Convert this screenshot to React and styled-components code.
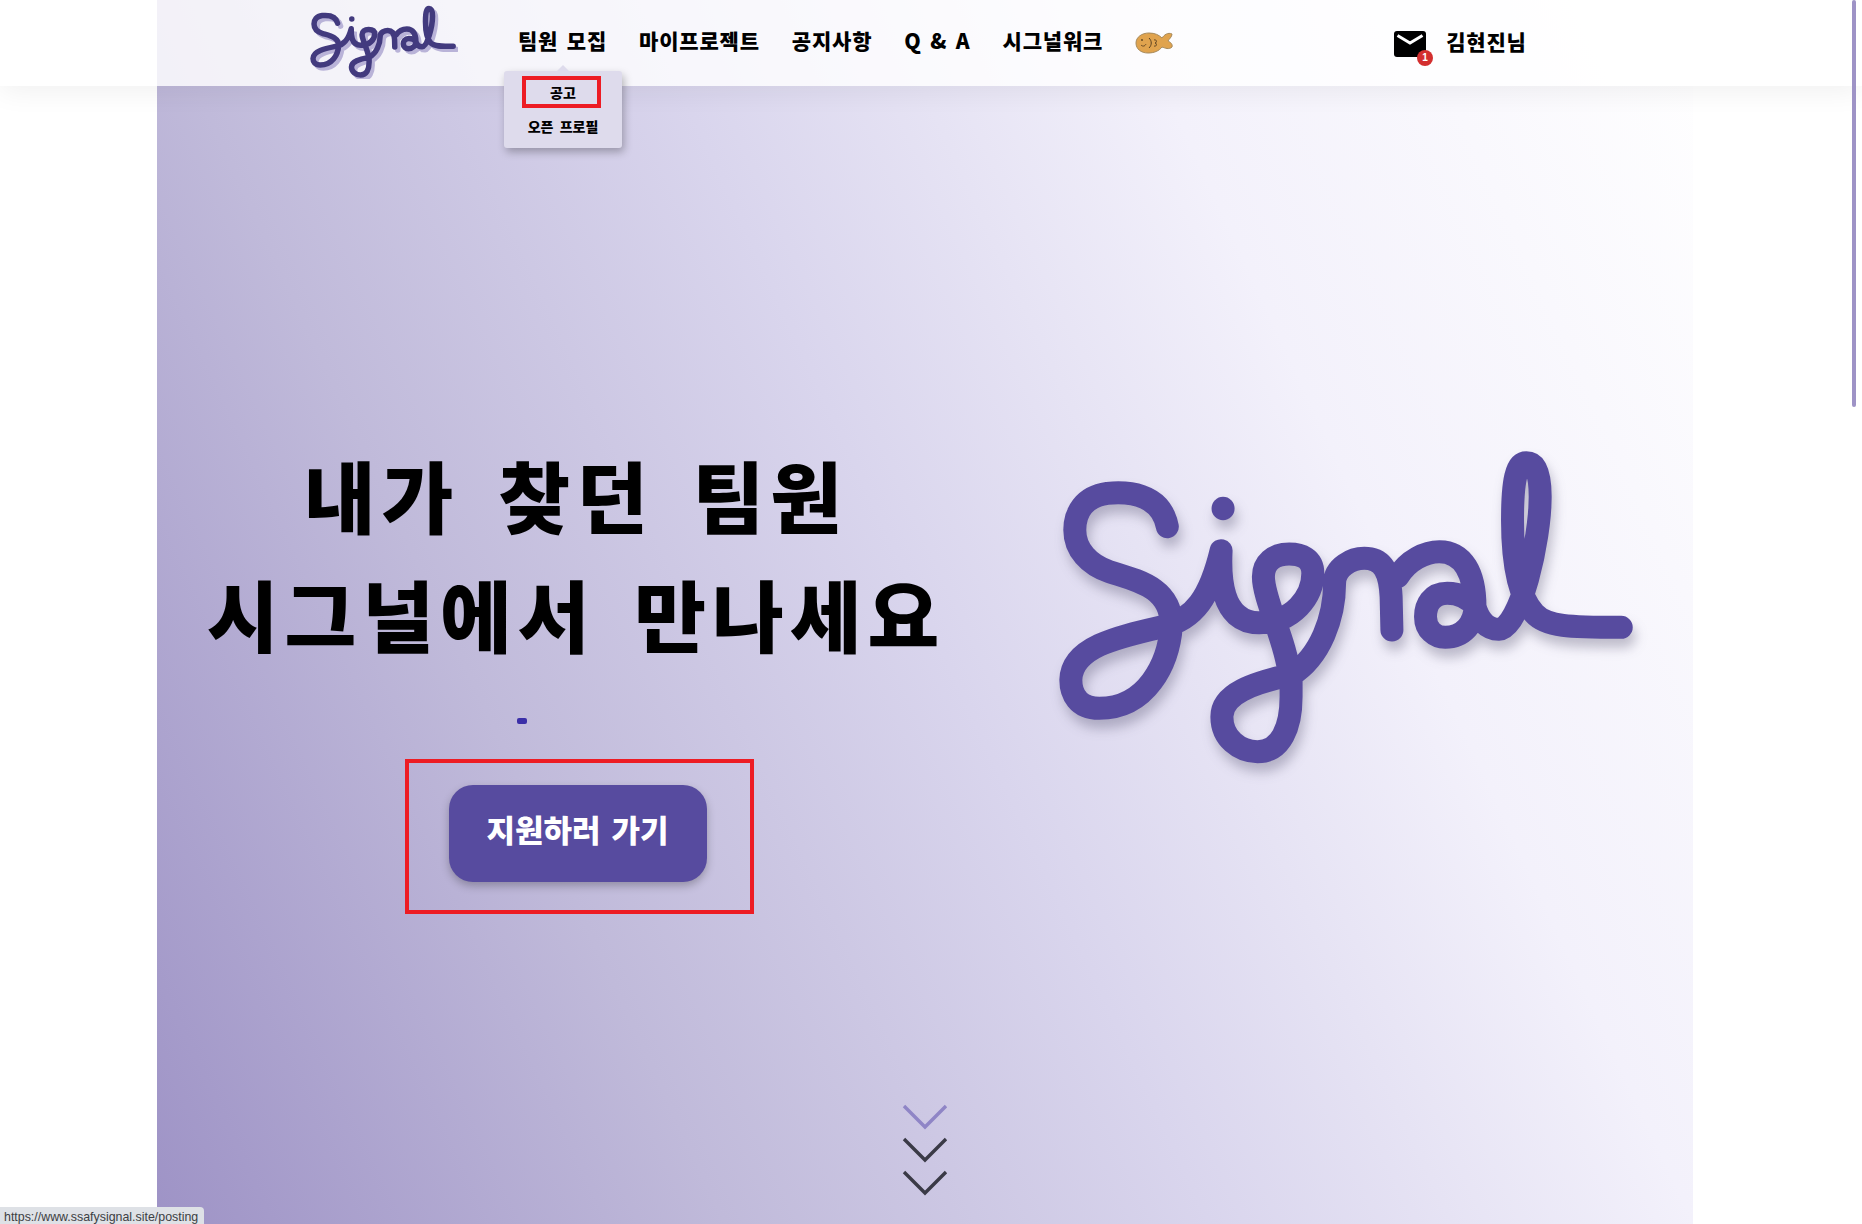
import styled, { createGlobalStyle } from "styled-components";

const GlobalStyle = createGlobalStyle`
  html, body {
    margin: 0;
    height: 100%;
    overflow: hidden;
    background: #fff;
    font-family: "Noto Sans CJK KR", "Noto Sans", sans-serif;
  }
  * { box-sizing: border-box; }
`;

const Page = styled.div`
  position: relative;
  height: 1224px;
  padding: 0 169px 0 157px;
`;

const Header = styled.header`
  position: absolute;
  top: 0;
  left: 0;
  right: 0;
  z-index: 5;
  height: 86px;
  display: flex;
  align-items: center;
  padding-left: 310px;
  background: rgba(255, 255, 255, 0.8);
  box-shadow: 0 6px 26px rgba(0, 0, 0, 0.06);
`;

const SmallLogoBox = styled.div`
  width: 148px;
  height: 76px;
  margin-top: -4px;
  flex: none;
`;

const Nav = styled.nav`
  display: flex;
  align-items: center;
  gap: 32px;
  margin-left: 60px;
`;

const NavItem = styled.div`
  position: relative;
  font-size: 21px;
  font-weight: 900;
  letter-spacing: 0.8px;
  color: #000;
  line-height: 28px;
  word-spacing: 3px;
  white-space: nowrap;
  margin-top: -6px;
`;

const Dropdown = styled.div`
  position: absolute;
  top: 45px;
  left: -14px;
  width: 118px;
  height: 77px;
  padding: 5px 0 0;
  display: flex;
  flex-direction: column;
  align-items: center;
  gap: 2px;
  background: #dedbec;
  border-radius: 3px;
  box-shadow: 2px 4px 9px rgba(0, 0, 0, 0.28);
  letter-spacing: 0;
  &::before {
    content: "";
    position: absolute;
    top: -6px;
    left: 53px;
    border-left: 6px solid transparent;
    border-right: 6px solid transparent;
    border-bottom: 6px solid #dedbec;
  }
`;

const DropItem = styled.div`
  width: 79px;
  height: 32px;
  display: flex;
  align-items: center;
  justify-content: center;
  font-size: 14px;
  font-weight: 900;
  color: #000;
  word-spacing: 3px;
  border: 4px solid ${(p) => (p.$marked ? "#ed1c24" : "transparent")};
  white-space: nowrap;
  ${(p) => p.$marked && "margin-right: 4px; padding-left: 4px;"}
`;

const UserBlock = styled.div`
  display: flex;
  align-items: center;
  gap: 20px;
  margin-left: 221px;
`;

const MailBox = styled.div`
  position: relative;
  width: 32px;
  height: 26px;
  margin-top: 1px;
`;

const Badge = styled.span`
  position: absolute;
  right: -7px;
  bottom: -9px;
  width: 16px;
  height: 16px;
  border-radius: 50%;
  background: #d32f2f;
  color: #fff;
  font-size: 10px;
  font-weight: 700;
  line-height: 16px;
  text-align: center;
  font-family: "Liberation Sans", sans-serif;
`;

const UserName = styled.div`
  font-size: 21px;
  font-weight: 900;
  letter-spacing: 0.8px;
  color: #000;
  margin-top: -5px;
`;

const Hero = styled.main`
  height: 1224px;
  display: flex;
  flex-direction: column;
  background: linear-gradient(65deg, #9e93c6 0%, #c0bada 27%, #d9d5ed 50%, #f3f1fb 73%, #ffffff 100%);
`;

const HeroRow = styled.section`
  display: flex;
  align-items: flex-start;
  padding-top: 430px;
`;

const HeroText = styled.div`
  width: 838px;
  flex: none;
  display: flex;
  flex-direction: column;
  align-items: center;
  padding-top: 5px;
`;

const Headline = styled.h1`
  margin: 0;
  font-size: 78px;
  font-weight: 900;
  letter-spacing: 6px;
  line-height: 119px;
  color: #000;
  text-align: center;
  word-spacing: 15px;
  white-space: nowrap;
`;

const Cursor = styled.span`
  width: 10px;
  height: 6px;
  margin: 45px 108px 0 0;
  border-radius: 2px;
  background: #3b2fa8;
`;

const CtaMark = styled.div`
  width: 349px;
  height: 155px;
  margin: 35px 0 0 6px;
  padding: 22px 0 0 40px;
  border: 4px solid #ed1c24;
`;

const CtaButton = styled.button`
  display: block;
  width: 258px;
  height: 97px;
  padding: 0 0 10px;
  border: none;
  border-radius: 24px;
  background: #574b9f;
  color: #fff;
  font-family: inherit;
  font-size: 31px;
  font-weight: 900;
  word-spacing: 4px;
  box-shadow: 0 4px 8px rgba(0, 0, 0, 0.25);
`;

const BigLogoBox = styled.div`
  width: 620px;
  height: 350px;
  margin-left: 45px;
  flex: none;
  filter: drop-shadow(3px 9px 6px rgba(60, 55, 90, 0.3));
`;

const Chevrons = styled.div`
  margin-top: auto;
  padding-bottom: 28px;
  display: flex;
  flex-direction: column;
  align-items: center;
  gap: 7px;
`;

const ScrollThumb = styled.div`
  position: absolute;
  top: 0;
  right: 6px;
  width: 4px;
  height: 407px;
  z-index: 6;
  border-radius: 3px;
  background: #9e93c6;
`;

const StatusBar = styled.div`
  position: absolute;
  left: 0;
  bottom: 0;
  z-index: 6;
  width: 204px;
  height: 17px;
  padding: 3px 0 0 4px;
  background: #dee1e6;
  border-top-right-radius: 4px;
  color: #3c4043;
  font-family: "Liberation Sans", sans-serif;
  font-size: 12.4px;
  line-height: 15px;
  white-space: nowrap;
  overflow: hidden;
`;

const SIGNAL_PATH = `
  M322 290 C305 185 215 185 170 190 C110 200 88 250 88 300 C88 360 125 405 175 425
  C240 450 335 470 332 590 C325 700 270 835 150 835 C95 835 78 790 78 750
  C80 650 200 620 310 590 C390 570 430 500 458 362
  C455 430 455 580 555 578 C640 578 690 500 690 430 C690 385 660 372 630 372
  C590 372 565 400 565 440 C565 510 625 640 630 735
  C540 760 460 790 460 860 C460 925 505 965 550 965 C610 965 635 890 635 800 L635 735
  C710 680 745 560 745 460 C745 410 790 385 820 385 C870 385 885 430 888 500 L890 600
  M905 440 C930 390 975 365 1010 365 C1070 365 1100 430 1100 530
  C1085 505 1060 490 1030 490 C990 490 975 525 975 560 C975 600 1000 622 1025 622
  C1070 622 1100 580 1100 530 C1110 570 1130 598 1160 598
  C1215 595 1265 330 1265 200 C1265 120 1250 98 1230 98 C1205 98 1195 150 1195 270
  C1195 400 1210 500 1250 550 C1280 590 1340 592 1470 592
`;

function SignalLogo({ color, width }) {
  return (
    <svg width="100%" height="100%" viewBox="0 0 1568 1050" preserveAspectRatio="none" fill="none">
      <path
        d={SIGNAL_PATH}
        stroke={color}
        strokeWidth={width}
        strokeLinecap="round"
        strokeLinejoin="round"
        vectorEffect="non-scaling-stroke"
      />
      <path
        d="M463 235 L463 236"
        stroke={color}
        strokeWidth={width}
        strokeLinecap="round"
        vectorEffect="non-scaling-stroke"
      />
    </svg>
  );
}

function SmallLogo() {
  return (
    <svg width="100%" height="100%" viewBox="48 27 1470 990" preserveAspectRatio="none" fill="none">
      <path
        d={SIGNAL_PATH}
        transform="translate(30 39)"
        stroke="#b9b3d8"
        strokeWidth="5.5"
        strokeLinecap="round"
        vectorEffect="non-scaling-stroke"
      />
      <path
        d={SIGNAL_PATH}
        stroke="#423a7e"
        strokeWidth="5.5"
        strokeLinecap="round"
        strokeLinejoin="round"
        vectorEffect="non-scaling-stroke"
      />
      <path d="M463 235 L463 236" stroke="#423a7e" strokeWidth="5.5" strokeLinecap="round" vectorEffect="non-scaling-stroke" />
    </svg>
  );
}

function FishIcon() {
  return (
    <svg width="38" height="22" viewBox="0 0 38 22" fill="none">
      <path
        d="M1 11 C1 5 7 1 14 1 C20 1 24 3 27 6 C29 3 33 0 37 2 C37 5 34 7 33 9 C35 10 38 12 37 15 C34 18 30 16 27 15 C24 19 19 21 13 21 C6 21 1 17 1 11 Z"
        fill="#e0a34e"
        stroke="#a78a5c"
        strokeWidth="1"
      />
      <circle cx="7" cy="8" r="0.9" fill="#5a4020" />
      <path d="M6 13 C8 15 10 14 11 12" stroke="#5a4020" strokeWidth="0.9" />
      <path d="M14 6 C17 9 17 13 14 16" stroke="#5a4020" strokeWidth="1" />
      <path d="M19 8 C22 7 22 11 20 11 C22 11 22 15 19 14" stroke="#5a4020" strokeWidth="1" />
    </svg>
  );
}

function MailIcon() {
  return (
    <svg width="32" height="26" viewBox="0 0 32 26">
      <rect width="32" height="26" rx="3" fill="#000" />
      <path d="M3.5 4.5 L16 12 L28.5 4.5" fill="none" stroke="#fff" strokeWidth="3" />
    </svg>
  );
}

function Chevron({ color }) {
  return (
    <svg width="46" height="26" viewBox="0 0 46 26" fill="none">
      <path d="M2 2 L23 23 L44 2" stroke={color} strokeWidth="3.4" />
    </svg>
  );
}

const navItems = ["마이프로젝트", "공지사항", "Q & A", "시그널워크"];

export default function App() {
  return (
    <>
      <GlobalStyle />
      <Page>
        <Header>
          <SmallLogoBox>
            <SmallLogo />
          </SmallLogoBox>
          <Nav>
            <NavItem>
              팀원 모집
              <Dropdown>
                <DropItem $marked>공고</DropItem>
                <DropItem>오픈 프로필</DropItem>
              </Dropdown>
            </NavItem>
            {navItems.map((item) => (
              <NavItem key={item}>{item}</NavItem>
            ))}
            <FishIcon />
          </Nav>
          <UserBlock>
            <MailBox>
              <MailIcon />
              <Badge>1</Badge>
            </MailBox>
            <UserName>김현진님</UserName>
          </UserBlock>
        </Header>

        <Hero>
          <HeroRow>
            <HeroText>
              <Headline>
                내가 찾던 팀원
                <br />
                시그널에서 만나세요
              </Headline>
              <Cursor />
              <CtaMark>
                <CtaButton>지원하러 가기</CtaButton>
              </CtaMark>
            </HeroText>
            <BigLogoBox>
              <SignalLogo color="#574b9f" width={23} />
            </BigLogoBox>
          </HeroRow>
          <Chevrons>
            <Chevron color="#8f85c6" />
            <Chevron color="#3a3a46" />
            <Chevron color="#3a3a46" />
          </Chevrons>
        </Hero>

        <ScrollThumb />
        <StatusBar>https://www.ssafysignal.site/posting</StatusBar>
      </Page>
    </>
  );
}
